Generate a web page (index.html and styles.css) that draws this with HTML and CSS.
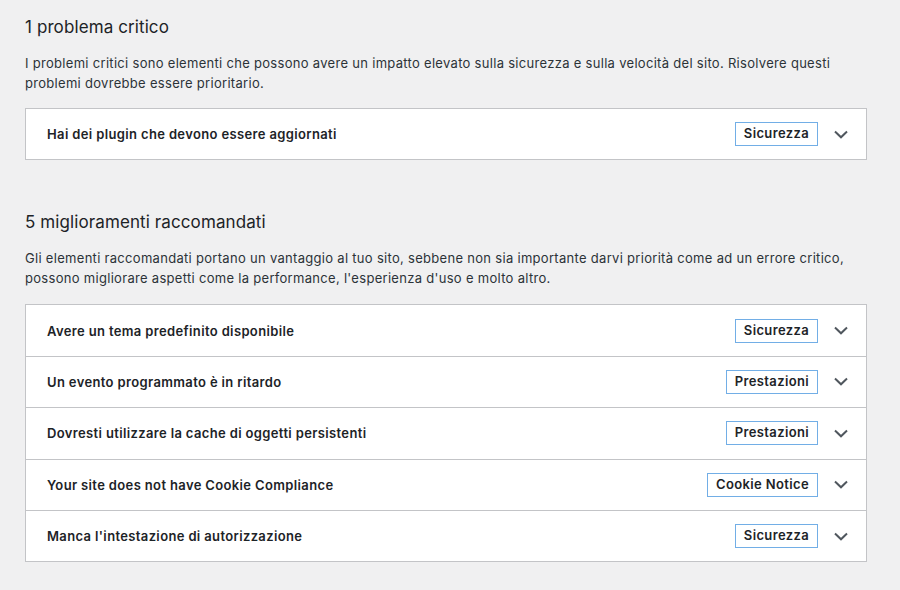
FILE: index.html
```html
<!DOCTYPE html>
<html lang="it">
<head>
<meta charset="utf-8">
<link rel="stylesheet" href="styles.css">
</head>
<body>
<div class="wrap">
  <section class="group">
    <h2 class="group-title">1 problema critico</h2>
    <p class="group-desc">I problemi critici sono elementi che possono avere un impatto elevato sulla sicurezza e sulla velocità del sito. Risolvere questi problemi dovrebbe essere prioritario.</p>
    <div class="accordion">
      <div class="row"><span class="row-title">Hai dei plugin che devono essere aggiornati</span><span class="badge">Sicurezza</span><svg class="chev" width="14" height="9" viewBox="0 0 14 9"><path d="M1 1.5 L7 7.3 L13 1.5" fill="none" stroke="#50575e" stroke-width="2"/></svg></div>
    </div>
  </section>
  <section class="group group-second">
    <h2 class="group-title">5 miglioramenti raccomandati</h2>
    <p class="group-desc">Gli elementi raccomandati portano un vantaggio al tuo sito, sebbene non sia importante darvi priorità come ad un errore critico, possono migliorare aspetti come la performance, l'esperienza d'uso e molto altro.</p>
    <div class="accordion">
      <div class="row"><span class="row-title">Avere un tema predefinito disponibile</span><span class="badge">Sicurezza</span><svg class="chev" width="14" height="9" viewBox="0 0 14 9"><path d="M1 1.5 L7 7.3 L13 1.5" fill="none" stroke="#50575e" stroke-width="2"/></svg></div>
      <div class="row"><span class="row-title">Un evento programmato è in ritardo</span><span class="badge">Prestazioni</span><svg class="chev" width="14" height="9" viewBox="0 0 14 9"><path d="M1 1.5 L7 7.3 L13 1.5" fill="none" stroke="#50575e" stroke-width="2"/></svg></div>
      <div class="row"><span class="row-title">Dovresti utilizzare la cache di oggetti persistenti</span><span class="badge">Prestazioni</span><svg class="chev" width="14" height="9" viewBox="0 0 14 9"><path d="M1 1.5 L7 7.3 L13 1.5" fill="none" stroke="#50575e" stroke-width="2"/></svg></div>
      <div class="row"><span class="row-title">Your site does not have Cookie Compliance</span><span class="badge">Cookie Notice</span><svg class="chev" width="14" height="9" viewBox="0 0 14 9"><path d="M1 1.5 L7 7.3 L13 1.5" fill="none" stroke="#50575e" stroke-width="2"/></svg></div>
      <div class="row"><span class="row-title">Manca l'intestazione di autorizzazione</span><span class="badge">Sicurezza</span><svg class="chev" width="14" height="9" viewBox="0 0 14 9"><path d="M1 1.5 L7 7.3 L13 1.5" fill="none" stroke="#50575e" stroke-width="2"/></svg></div>
    </div>
  </section>
</div>
</body>
</html>
```
FILE: styles.css
```css
html, body {
  margin: 0;
  padding: 0;
  background: #f0f0f1;
}
body {
  font-family: Inter, "Liberation Sans", Arial, sans-serif;
  color: #1d2327;
  font-size: 13px;
}
.wrap {
  width: 842px;
  padding: 15px 0 0 25px;
}
.group-second {
  margin-top: 50px;
}
.group-title {
  margin: 0;
  font-size: 17px;
  font-weight: 400;
  line-height: 24px;
  letter-spacing: 0.1px;
  color: #1d2327;
}
.group-desc {
  margin: 14px 0 15px;
  line-height: 20px;
  letter-spacing: 0.3px;
  color: #2c3338;
}
.group-second .group-desc {
  margin-bottom: 16px;
}
.accordion {
  background: #fff;
  border: 1px solid #c3c4c7;
  border-bottom: 0;
}
.row {
  display: flex;
  align-items: center;
  height: 50.4px;
  padding: 0 18px 0 21px;
  border-bottom: 1px solid #c3c4c7;
}
.row-title {
  flex: 1;
  font-weight: 600;
  letter-spacing: 0.36px;
  color: #1d2327;
}
.badge {
  font-weight: 600;
  letter-spacing: 0.36px;
  border: 1px solid #72aee6;
  padding: 3px 8px 4px;
  line-height: 15px;
  color: #1d2327;
  margin-right: 16px;
}
.chev {
  display: block;
}
```
